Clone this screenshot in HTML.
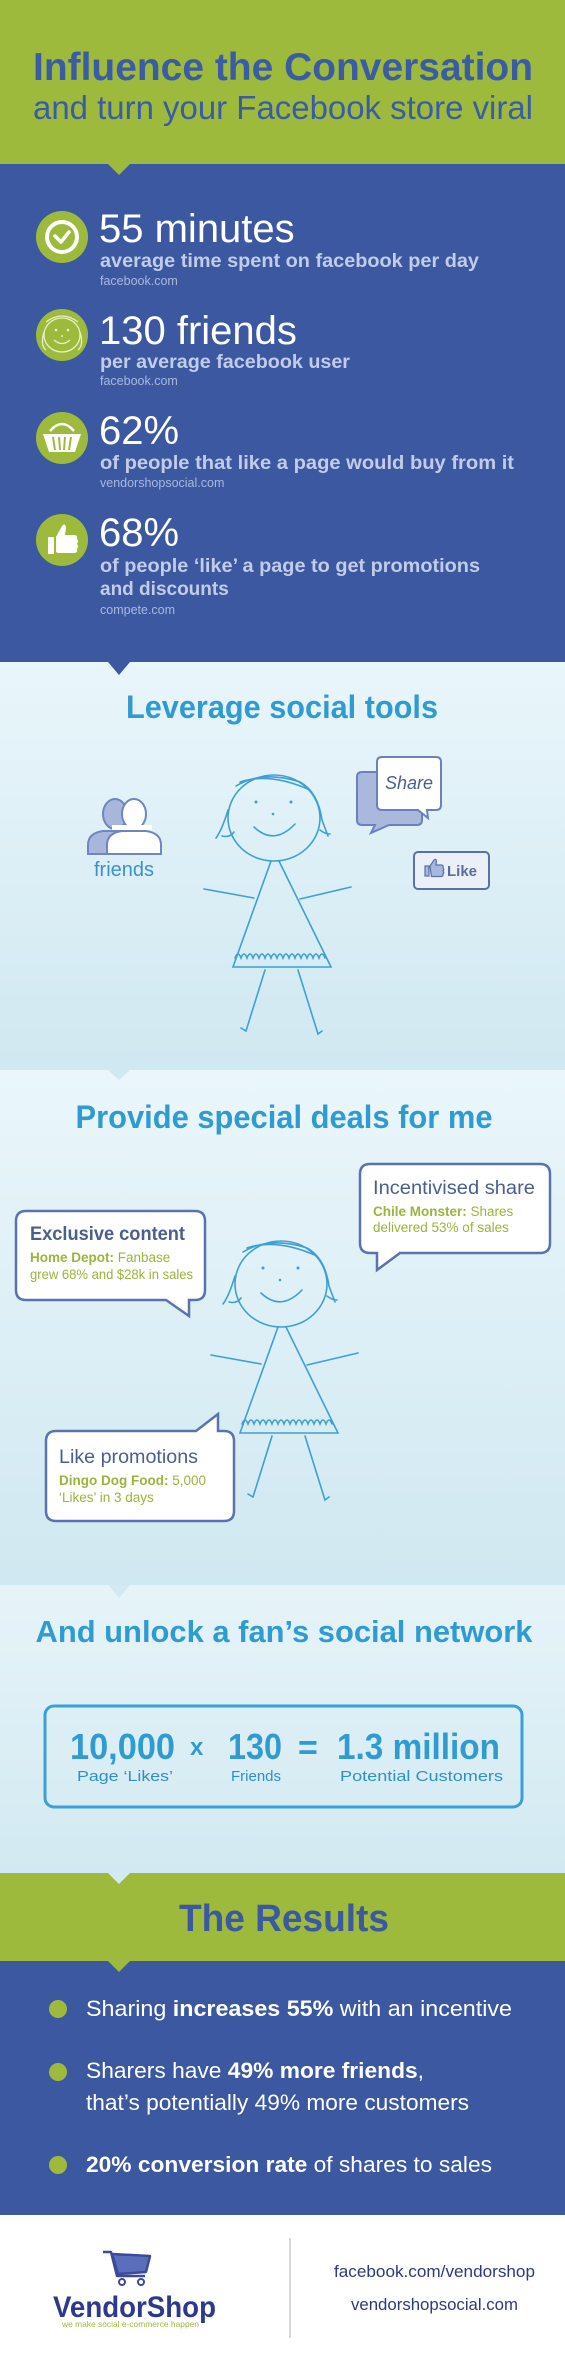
<!DOCTYPE html>
<html><head><meta charset="utf-8"><style>
html,body{margin:0;padding:0;background:#fff}
svg{display:block}
text{font-family:"Liberation Sans",sans-serif}
</style></head><body>
<svg width="565" height="2362" viewBox="0 0 565 2362" xmlns="http://www.w3.org/2000/svg">
<defs>
<linearGradient id="g1" x1="0" y1="0" x2="0" y2="1"><stop offset="0" stop-color="#e9f6fb"/><stop offset="1" stop-color="#d0e8f1"/></linearGradient>
<linearGradient id="g2" x1="0" y1="0" x2="0" y2="1"><stop offset="0" stop-color="#eaf6fb"/><stop offset="1" stop-color="#d0e8f1"/></linearGradient>
<linearGradient id="g3" x1="0" y1="0" x2="0" y2="1"><stop offset="0" stop-color="#e6f4f9"/><stop offset="1" stop-color="#d2e9f1"/></linearGradient>
</defs>

<!-- header -->
<rect x="0" y="0" width="565" height="164" fill="#9dba3d"/>
<text x="33" y="80" font-size="39" font-weight="bold" fill="#3b5ca5" textLength="500" lengthAdjust="spacingAndGlyphs">Influence the Conversation</text>
<text x="33" y="119" font-size="33" fill="#3b5ca5" textLength="500" lengthAdjust="spacingAndGlyphs">and turn your Facebook store viral</text>

<!-- blue stats -->
<rect x="0" y="164" width="565" height="498" fill="#3b58a0"/>
<polygon points="108,164 130,164 119,175" fill="#9dba3d"/>

<g fill="#9dba3d"><circle cx="62" cy="237" r="26"/><circle cx="62" cy="335" r="26"/><circle cx="62" cy="438" r="26"/><circle cx="62" cy="540" r="26"/></g>
<!-- clock -->
<circle cx="62" cy="237" r="15" fill="none" stroke="#fff" stroke-width="4"/>
<path d="M55 236 L61 242 L69 232" fill="none" stroke="#fff" stroke-width="3.5" stroke-linecap="round" stroke-linejoin="round"/>
<!-- face -->
<g fill="none" stroke="#e8f0c8" stroke-width="1.3">
<ellipse cx="62" cy="335" rx="18" ry="17"/>
<path d="M44 332 Q40 345 46 350 M80 332 Q84 345 78 350 M46 322 Q62 310 78 322"/>
<path d="M54 340 Q62 347 70 340"/>
</g>
<circle cx="56" cy="330" r="1.3" fill="#e8f0c8"/><circle cx="68" cy="330" r="1.3" fill="#e8f0c8"/><circle cx="62" cy="336" r="1" fill="#e8f0c8"/>
<!-- basket -->
<path d="M43 434 L81 434 L75 452 L49 452 Z" fill="#fff"/>
<path d="M50 431 Q62 417 74 431" fill="none" stroke="#fff" stroke-width="2.5"/>
<g stroke="#9dba3d" stroke-width="2"><line x1="53" y1="437" x2="55" y2="450"/><line x1="59" y1="437" x2="60" y2="450"/><line x1="65" y1="437" x2="64" y2="450"/><line x1="71" y1="437" x2="69" y2="450"/></g>
<!-- thumbs -->
<path d="M48 537 h6 v17 h-6 z M56 537 L62 526 Q65 522 66 528 L65 535 H75 Q78 536 77 539 Q79 541 77 544 Q79 546 77 549 Q78 552 75 553 H58 L56 552 Z" fill="#fff"/>

<g fill="#fff" font-size="40">
<text x="99" y="242">55 minutes</text>
<text x="99" y="344">130 friends</text>
<text x="99" y="444">62%</text>
<text x="99" y="546">68%</text>
</g>
<g fill="#c2cce8" font-size="19" font-weight="bold">
<text x="100" y="267" textLength="379" lengthAdjust="spacingAndGlyphs">average time spent on facebook per day</text>
<text x="100" y="368" textLength="250" lengthAdjust="spacingAndGlyphs">per average facebook user</text>
<text x="100" y="469" textLength="414" lengthAdjust="spacingAndGlyphs">of people that like a page would buy from it</text>
<text x="100" y="572" textLength="380" lengthAdjust="spacingAndGlyphs">of people ‘like’ a page to get promotions</text>
<text x="100" y="595">and discounts</text>
</g>
<g fill="#aab8de" font-size="12.5">
<text x="100" y="285">facebook.com</text>
<text x="100" y="385">facebook.com</text>
<text x="100" y="487">vendorshopsocial.com</text>
<text x="100" y="614">compete.com</text>
</g>

<!-- leverage -->
<rect x="0" y="662" width="565" height="408" fill="url(#g1)"/>
<polygon points="108,662 130,662 119,675" fill="#3b58a0"/>
<text x="282" y="718" font-size="32" font-weight="bold" fill="#2f9bd1" text-anchor="middle" textLength="312" lengthAdjust="spacingAndGlyphs">Leverage social tools</text>

<!-- friends icon -->
<g stroke="#6f86c0" stroke-width="2">
<ellipse cx="115" cy="814" rx="12" ry="15" fill="#a8b6db"/>
<path d="M88 854 v-9 q0-12 15-14 h24 q15 2 15 14 v9 z" fill="#a8b6db"/>
<ellipse cx="134" cy="814" rx="12" ry="15" fill="#fff"/>
<path d="M107 854 v-9 q0-12 15-14 h24 q15 2 15 14 v9 z" fill="#fff"/>
</g>
<rect x="112" y="825" width="40" height="5" fill="#fff"/>
<text x="124" y="876" font-size="20" fill="#3a93c6" text-anchor="middle">friends</text>

<!-- share bubble -->
<path d="M362 772 h55 q5 0 5 5 v43 q0 5 -5 5 h-28 l-18 8 l4 -8 h-13 q-5 0 -5 -5 v-43 q0 -5 5 -5 z" fill="#aab8dc" stroke="#6a80c0" stroke-width="2"/>
<path d="M382 757 h54 q5 0 5 5 v43 q0 5 -5 5 h-9 l1 8 l-10 -8 h-36 q-5 0 -5 -5 v-43 q0 -5 5 -5 z" fill="#fff" stroke="#6a80c0" stroke-width="2"/>
<text x="409" y="789" font-size="18" font-style="italic" fill="#4a5e92" text-anchor="middle">Share</text>
<!-- like button -->
<rect x="414" y="852" width="75" height="37" rx="4" fill="#eaeff8" stroke="#5a70a8" stroke-width="2"/>
<path d="M425 866 h4 v10 h-4 z M430 866 l4 -6 q2 -2 2.5 1 l-0.5 4 h6 q2 1 1 3 q1.5 1.5 0 3 q1.5 1.5 0 3 q0.5 2 -1.5 2.5 h-10 z" fill="#a8b8dc" stroke="#5a70a8" stroke-width="1.2"/>
<text x="447" y="876" font-size="15" font-weight="bold" fill="#5a6e9e">Like</text>

<!-- stick figure -->
<g id="fig" fill="none" stroke="#3f9fd4" stroke-width="1.6" stroke-linecap="round">
<ellipse cx="274" cy="818" rx="46" ry="43"/>
<path d="M228 810 Q222 830 216 838 M222 836 Q230 838 234 832 M236 786 Q262 770 300 782 Q318 792 322 820 L328 836 M240 782 Q270 772 310 790 M320 830 Q325 834 330 834"/>
<path d="M254 827 Q274 846 295 824"/>
<path d="M271 861 L233 967 L331 967 L279 861"/>
<path d="M235 958 q3 -8 6 0 q3 -8 6 0 q3 -8 6 0 q3 -8 6 0 q3 -8 6 0 q3 -8 6 0 q3 -8 6 0 q3 -8 6 0 q3 -8 6 0 q3 -8 6 0 q3 -8 6 0 q3 -8 6 0 q3 -8 6 0 q3 -8 6 0 q3 -8 6 0"/>
<path d="M204 889 L254 898 M300 899 L351 887"/>
<path d="M265 970 L246 1031 L241 1028 M298 970 L318 1034 L322 1031"/>
</g>
<g fill="#3f9fd4"><circle cx="256" cy="802" r="1.5"/><circle cx="291" cy="802" r="1.5"/><circle cx="273" cy="814" r="1.3"/></g>

<!-- provide deals -->
<rect x="0" y="1070" width="565" height="515" fill="url(#g2)"/>
<polygon points="108,1070 130,1070 119,1080" fill="#d0e8f1"/>
<text x="284" y="1128" font-size="32" font-weight="bold" fill="#2f9bd1" text-anchor="middle" textLength="417" lengthAdjust="spacingAndGlyphs">Provide special deals for me</text>

<g transform="translate(7,466)">
<use href="#fig"/>
<g fill="#3f9fd4"><circle cx="256" cy="802" r="1.5"/><circle cx="291" cy="802" r="1.5"/><circle cx="273" cy="814" r="1.3"/></g>
</g>

<!-- bubbles -->
<path d="M370 1164 h170 q10 0 10 10 v69 q0 10 -10 10 h-140 l-23 17 v-17 h-7 q-10 0 -10 -10 v-69 q0 -10 10 -10 z" fill="#fff" stroke="#5a72b0" stroke-width="2.5"/>
<text x="373" y="1194" font-size="19" fill="#4a5e92" textLength="162" lengthAdjust="spacingAndGlyphs">Incentivised share</text>
<text x="373" y="1216" font-size="13.5" fill="#9bb43a"><tspan font-weight="bold">Chile Monster:</tspan> Shares</text>
<text x="373" y="1232" font-size="13.5" fill="#9bb43a">delivered 53% of sales</text>

<path d="M26 1211 h169 q10 0 10 10 v69 q0 10 -10 10 h-6 v16 l-23 -16 h-140 q-10 0 -10 -10 v-69 q0 -10 10 -10 z" fill="#fff" stroke="#5a72b0" stroke-width="2.5"/>
<text x="30" y="1240" font-size="19" font-weight="bold" fill="#4a5e92" textLength="155" lengthAdjust="spacingAndGlyphs">Exclusive content</text>
<text x="30" y="1262" font-size="13.5" fill="#9bb43a"><tspan font-weight="bold">Home Depot:</tspan> Fanbase</text>
<text x="30" y="1279" font-size="13.5" fill="#9bb43a" textLength="163" lengthAdjust="spacingAndGlyphs">grew 68% and $28k in sales</text>

<path d="M56 1431 h140 l22 -17 v17 h6 q10 0 10 10 v70 q0 10 -10 10 h-168 q-10 0 -10 -10 v-70 q0 -10 10 -10 z" fill="#fff" stroke="#5a72b0" stroke-width="2.5"/>
<text x="59" y="1463" font-size="19" fill="#4a5e92" textLength="139" lengthAdjust="spacingAndGlyphs">Like promotions</text>
<text x="59" y="1485" font-size="13.5" fill="#9bb43a"><tspan font-weight="bold">Dingo Dog Food:</tspan> 5,000</text>
<text x="59" y="1502" font-size="13.5" fill="#9bb43a">‘Likes’ in 3 days</text>

<!-- unlock -->
<rect x="0" y="1585" width="565" height="288" fill="url(#g3)"/>
<polygon points="108,1585 130,1585 119,1598" fill="#d4eaf2"/>
<text x="284" y="1642" font-size="31" font-weight="bold" fill="#2f9bd1" text-anchor="middle" textLength="497" lengthAdjust="spacingAndGlyphs">And unlock a fan’s social network</text>
<rect x="45" y="1706" width="477" height="101" rx="9" fill="none" stroke="#3aa0d6" stroke-width="3"/>
<g fill="#2f9bd1" font-weight="bold">
<text x="70" y="1759" font-size="36" textLength="105" lengthAdjust="spacingAndGlyphs">10,000</text>
<text x="190" y="1755" font-size="24">x</text>
<text x="228" y="1759" font-size="36" textLength="54" lengthAdjust="spacingAndGlyphs">130</text>
<text x="298" y="1759" font-size="34">=</text>
<text x="337" y="1759" font-size="36" textLength="163" lengthAdjust="spacingAndGlyphs">1.3 million</text>
<g font-size="15" font-weight="normal" fill="#2f8fc8">
<text x="77" y="1781" textLength="96" lengthAdjust="spacingAndGlyphs">Page ‘Likes’</text>
<text x="231" y="1781">Friends</text>
<text x="340" y="1781" textLength="163" lengthAdjust="spacingAndGlyphs">Potential Customers</text>
</g>
</g>

<!-- results -->
<rect x="0" y="1873" width="565" height="88" fill="#9dba3d"/>
<polygon points="108,1873 130,1873 119,1884" fill="#d4eaf2"/>
<text x="284" y="1931" font-size="38" font-weight="bold" fill="#3b58a0" text-anchor="middle" textLength="210" lengthAdjust="spacingAndGlyphs">The Results</text>
<rect x="0" y="1961" width="565" height="254" fill="#3b58a0"/>
<polygon points="108,1961 130,1961 119,1972" fill="#9dba3d"/>
<g fill="#9dba3d"><circle cx="58" cy="2009" r="9"/><circle cx="58" cy="2072" r="9"/><circle cx="58" cy="2165" r="9"/></g>
<g fill="#fff" font-size="22">
<text x="86" y="2016" textLength="426" lengthAdjust="spacingAndGlyphs">Sharing <tspan font-weight="bold">increases 55%</tspan> with an incentive</text>
<text x="86" y="2078" textLength="338" lengthAdjust="spacingAndGlyphs">Sharers have <tspan font-weight="bold">49% more friends</tspan>,</text>
<text x="86" y="2110" textLength="383" lengthAdjust="spacingAndGlyphs">that’s potentially 49% more customers</text>
<text x="86" y="2172" textLength="406" lengthAdjust="spacingAndGlyphs"><tspan font-weight="bold">20% conversion rate</tspan> of shares to sales</text>
</g>

<!-- footer -->
<rect x="0" y="2215" width="565" height="147" fill="#fff"/>
<line x1="290" y1="2238" x2="290" y2="2338" stroke="#cccccc" stroke-width="1.5"/>
<g fill="none" stroke="#3c4a98" stroke-width="2.5" stroke-linejoin="round">
<path d="M103 2252 h8 l6 24 h28"/>
<path d="M112 2254 L150 2256 L146 2272 L118 2274 Z" fill="#5a6fbc"/>
</g>
<circle cx="122" cy="2282" r="3" fill="#fff" stroke="#3c4a98" stroke-width="2"/>
<circle cx="141" cy="2282" r="3" fill="#fff" stroke="#3c4a98" stroke-width="2"/>
<text x="53" y="2317" font-size="30" font-weight="bold" fill="#2d3a8c" textLength="163" lengthAdjust="spacingAndGlyphs">VendorShop</text>
<text x="62" y="2327" font-size="8.5" fill="#9dba3d" textLength="137" lengthAdjust="spacingAndGlyphs">we make social e-commerce happen</text>
<text x="334" y="2277" font-size="17" fill="#2d3a80" textLength="201" lengthAdjust="spacingAndGlyphs">facebook.com/vendorshop</text>
<text x="351" y="2310" font-size="17" fill="#2d3a80" textLength="167" lengthAdjust="spacingAndGlyphs">vendorshopsocial.com</text>
</svg>
</body></html>
